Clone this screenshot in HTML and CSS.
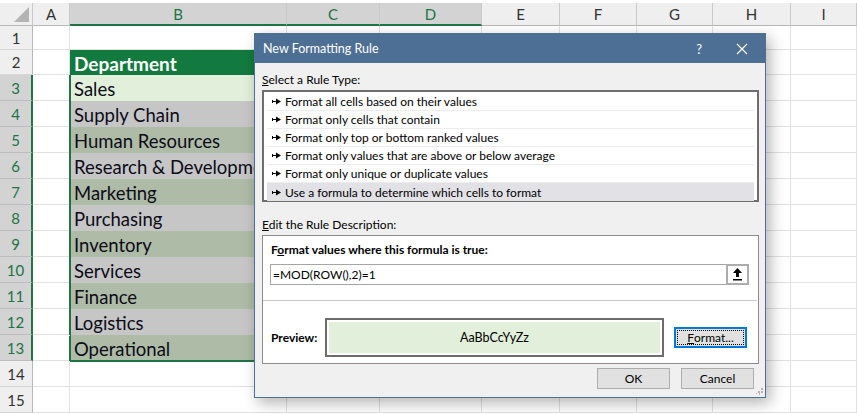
FILE: index.html
```html
<!DOCTYPE html>
<html>
<head>
<meta charset="utf-8">
<title>New Formatting Rule</title>
<link rel="stylesheet" href="styles.css">
</head>
<body>
<div class="sheet">
  <div class="h corner"><span class="tri"></span></div>
  <div class="h">A</div><div class="h sel">B</div><div class="h sel">C</div><div class="h sel">D</div><div class="h">E</div><div class="h">F</div><div class="h">G</div><div class="h">H</div><div class="h">I</div>

  <div class="rh">1</div><div class="c"></div><div class="c"></div><div class="c"></div><div class="c"></div><div class="c"></div><div class="c"></div><div class="c"></div><div class="c"></div><div class="c"></div>
  <div class="rh">2</div><div class="c"></div><div class="t hd">Department</div><div class="c"></div><div class="c"></div><div class="c"></div><div class="c"></div><div class="c"></div>
  <div class="rh sel">3</div><div class="c"></div><div class="t s act">Sales</div><div class="c"></div><div class="c"></div><div class="c"></div><div class="c"></div><div class="c"></div>
  <div class="rh sel">4</div><div class="c"></div><div class="t s w">Supply Chain</div><div class="c"></div><div class="c"></div><div class="c"></div><div class="c"></div><div class="c"></div>
  <div class="rh sel">5</div><div class="c"></div><div class="t s g">Human Resources</div><div class="c"></div><div class="c"></div><div class="c"></div><div class="c"></div><div class="c"></div>
  <div class="rh sel">6</div><div class="c"></div><div class="t s w">Research &amp; Development</div><div class="c"></div><div class="c"></div><div class="c"></div><div class="c"></div><div class="c"></div>
  <div class="rh sel">7</div><div class="c"></div><div class="t s g">Marketing</div><div class="c"></div><div class="c"></div><div class="c"></div><div class="c"></div><div class="c"></div>
  <div class="rh sel">8</div><div class="c"></div><div class="t s w">Purchasing</div><div class="c"></div><div class="c"></div><div class="c"></div><div class="c"></div><div class="c"></div>
  <div class="rh sel">9</div><div class="c"></div><div class="t s g">Inventory</div><div class="c"></div><div class="c"></div><div class="c"></div><div class="c"></div><div class="c"></div>
  <div class="rh sel">10</div><div class="c"></div><div class="t s w">Services</div><div class="c"></div><div class="c"></div><div class="c"></div><div class="c"></div><div class="c"></div>
  <div class="rh sel">11</div><div class="c"></div><div class="t s g">Finance</div><div class="c"></div><div class="c"></div><div class="c"></div><div class="c"></div><div class="c"></div>
  <div class="rh sel">12</div><div class="c"></div><div class="t s w">Logistics</div><div class="c"></div><div class="c"></div><div class="c"></div><div class="c"></div><div class="c"></div>
  <div class="rh sel">13</div><div class="c"></div><div class="t s g last">Operational</div><div class="c"></div><div class="c"></div><div class="c"></div><div class="c"></div><div class="c"></div>
  <div class="rh">14</div><div class="c"></div><div class="c"></div><div class="c"></div><div class="c"></div><div class="c"></div><div class="c"></div><div class="c"></div><div class="c"></div><div class="c"></div>
  <div class="rh">15</div><div class="c"></div><div class="c"></div><div class="c"></div><div class="c"></div><div class="c"></div><div class="c"></div><div class="c"></div><div class="c"></div><div class="c"></div>
</div>

<div class="dialog">
  <div class="titlebar">
    <span class="title">New Formatting Rule</span>
    <span class="help">?</span>
    <svg class="close" width="12" height="12" viewBox="0 0 12 12"><path d="M1 1L11 11M11 1L1 11" stroke="#fff" stroke-width="1.2" fill="none"/></svg>
  </div>
  <div class="dbody">
    <div class="lbl"><u>S</u>elect a Rule Type:</div>
    <ul class="list">
      <li><svg class="arr" width="9" height="7" viewBox="0 0 9 7"><path d="M0 2h1v3H0zM1 3h3v1H1zM4 0.5l5 3l-5 3z" fill="#000"/></svg>Format all cells based on their values</li>
      <li><svg class="arr" width="9" height="7" viewBox="0 0 9 7"><path d="M0 2h1v3H0zM1 3h3v1H1zM4 0.5l5 3l-5 3z" fill="#000"/></svg>Format only cells that contain</li>
      <li><svg class="arr" width="9" height="7" viewBox="0 0 9 7"><path d="M0 2h1v3H0zM1 3h3v1H1zM4 0.5l5 3l-5 3z" fill="#000"/></svg>Format only top or bottom ranked values</li>
      <li><svg class="arr" width="9" height="7" viewBox="0 0 9 7"><path d="M0 2h1v3H0zM1 3h3v1H1zM4 0.5l5 3l-5 3z" fill="#000"/></svg>Format only values that are above or below average</li>
      <li><svg class="arr" width="9" height="7" viewBox="0 0 9 7"><path d="M0 2h1v3H0zM1 3h3v1H1zM4 0.5l5 3l-5 3z" fill="#000"/></svg>Format only unique or duplicate values</li>
      <li class="on"><svg class="arr" width="9" height="7" viewBox="0 0 9 7"><path d="M0 2h1v3H0zM1 3h3v1H1zM4 0.5l5 3l-5 3z" fill="#000"/></svg>Use a formula to determine which cells to format</li>
    </ul>
    <div class="lbl lbl2"><u>E</u>dit the Rule Description:</div>
    <div class="desc">
      <div class="blbl">F<u>o</u>rmat values where this formula is true:</div>
      <div class="formula">
        <span class="ftext">=MOD(ROW(),2)=1</span>
        <span class="refbtn"><svg width="11" height="13" viewBox="0 0 11 13"><path d="M5.5 0L10 5H7v4H4V5H1z" fill="#000"/><rect x="1" y="11" width="9" height="1.5" fill="#000"/></svg></span>
      </div>
      <div class="sep"></div>
      <div class="prow">
        <span class="plbl">Preview:</span>
        <div class="pbox"><div class="pfill">AaBbCcYyZz</div></div>
        <div class="btn fmt"><span class="focus"><u>F</u>ormat...</span></div>
      </div>
    </div>
    <div class="actions">
      <div class="btn">OK</div>
      <div class="btn">Cancel</div>
    </div>
  </div>
  <svg class="grip" width="7" height="7" viewBox="0 0 7 7"><path d="M5 0h2v2H5zM2 3h2v2H2zM5 3h2v2H5zM0 5h1v1H0zM3 5h1v2H3z" fill="#b5b5b5"/></svg>
</div>
</body>
</html>
```

FILE: styles.css
```css
* { box-sizing: border-box; }
html, body { margin: 0; padding: 0; background: #fff; }
body { width: 857px; height: 414px; overflow: hidden; position: relative; }

.sheet {
  display: grid;
  padding-top: 3px;
  grid-template-columns: 33px 37px 217px 93px 102px 78px 77px 76px 78px 1fr;
  grid-template-rows: 23px 24px 25px repeat(13, 26px);
  font-family: Lato, "Liberation Sans", sans-serif;
}

.h {
  background: #efefef;
  border-right: 1px solid #c9c9c9;
  border-bottom: 1px solid #b8b8b8;
  color: #333;
  font-size: 15px;
  display: flex; align-items: center; justify-content: center;
}
.h.sel { background: #d3d3d3; color: #217346; border-bottom: 2px solid #217346; }
.h.corner { position: relative; }
.tri {
  position: absolute; right: 3px; bottom: 3px;
  width: 0; height: 0;
  border-left: 15px solid transparent;
  border-bottom: 15px solid #b4b4b4;
}

.rh {
  background: #efefef;
  border-right: 1px solid #b8b8b8;
  border-bottom: 1px solid #d6d6d6;
  color: #333;
  font-size: 15px;
  display: flex; align-items: center; justify-content: center;
}
.rh.sel { background: #d3d3d3; color: #217346; border-right: 2px solid #217346; border-bottom-color: #bdbdbd; }

.c { border-right: 1px solid #e1e1e1; border-bottom: 1px solid #e1e1e1; }

.t {
  grid-column: span 3;
  font-size: 18.5px;
  color: #0c0c18;
  padding: 2px 0 0 4px;
  display: flex; align-items: center;
  white-space: nowrap; overflow: hidden;
  border-right: 1px solid #e1e1e1;
}
.t.hd { background: #127a3e; color: #fff; font-weight: bold; font-size: 19px; }
.t.act { background: #e2efda; }
.t.w { background: #c6c6c6; }
.t.g { background: #aebba6; }
/* selection outline of B3:D13 */
.t.s { overflow: visible; box-shadow: -1px 0 0 #217346, inset 1px 0 0 #217346; }
.t.s.last { box-shadow: -1px 1px 0 #217346, inset 1px -1px 0 #217346; }

/* dialog */
.dialog {
  position: absolute;
  left: 254px; top: 33px;
  width: 512px; height: 365px;
  border: 1px solid #4e6f94;
  background: #f0f0f0;
  box-shadow: 4px 5px 14px rgba(0,0,0,0.3);
  font-family: Lato, "Liberation Sans", sans-serif;
  font-size: 12px;
  color: #000;
}
.titlebar {
  height: 29px;
  background: #4e6f94;
  color: #fff;
  display: flex; align-items: center;
  padding-left: 8px;
}
.title { flex: 1; font-size: 12.5px; }
.help { font-size: 13px; margin-right: 34px; }
.close { margin-right: 17px; }

.dbody { padding: 0 6px 0 7px; display: flex; flex-direction: column; }
.lbl { height: 16px; line-height: 16px; margin-top: 9px; }
.lbl2 { margin-top: 15px; }

.list {
  list-style: none; margin: 2px 0 0 0; padding: 1px 3px;
  height: 112px;
  background: #fff;
  border: 2px solid #6e6e6e;
}
.list li {
  height: 18px;
  display: flex; align-items: center;
  padding-left: 5px;
  border-bottom: 1px solid #ececec;
}
.list li.on { background: #e1e1e6; border-bottom: none; }
.arr { margin-right: 4px; }

.desc {
  margin-top: 2px;
  height: 129px;
  background: #fff;
  border: 1px solid #8c8c8c;
  padding: 6px 1px 0 7px;
  display: flex; flex-direction: column;
}
.blbl { font-weight: bold; height: 16px; line-height: 16px; padding-left: 1px; }
.formula {
  margin-top: 6px;
  width: 479px; height: 21px;
  border: 1px solid #a5a5a5;
  display: flex; align-items: center;
}
.ftext { flex: 1; padding-left: 2px; }
.refbtn {
  width: 23px; height: 21px;
  margin-right: -1px;
  border: 2px solid #adadad;
  background: #fff;
  display: flex; align-items: center; justify-content: center;
}
.sep { margin: 15px 0 0 -7px; width: 494px; height: 1px; background: #c8c8c8; }
.prow { margin-top: 17px; display: flex; align-items: center; }
.plbl { font-weight: bold; width: 55px; padding-left: 1px; }
.pbox {
  width: 339px; height: 39px;
  border: 2px solid #6d6d6d;
  padding: 2px;
  background: #fff;
}
.pfill {
  height: 100%;
  background: #e2efda;
  display: flex; align-items: center; justify-content: center;
  font-size: 12.5px;
}
.btn {
  width: 73px; height: 21px;
  background: #e1e1e1;
  border: 1px solid #adadad;
  display: flex; align-items: center; justify-content: center;
}
.btn.fmt { margin-left: 10px; border: 2px solid #0078d7; height: 21px; padding: 1px; }
.focus {
  width: 100%; height: 100%;
  border: 1px dotted #000;
  display: flex; align-items: center; justify-content: center;
}
.actions { display: flex; justify-content: flex-end; gap: 11px; margin-top: 4px; padding-right: 5px; }
.grip { position: absolute; right: 2px; bottom: 2px; }
```
